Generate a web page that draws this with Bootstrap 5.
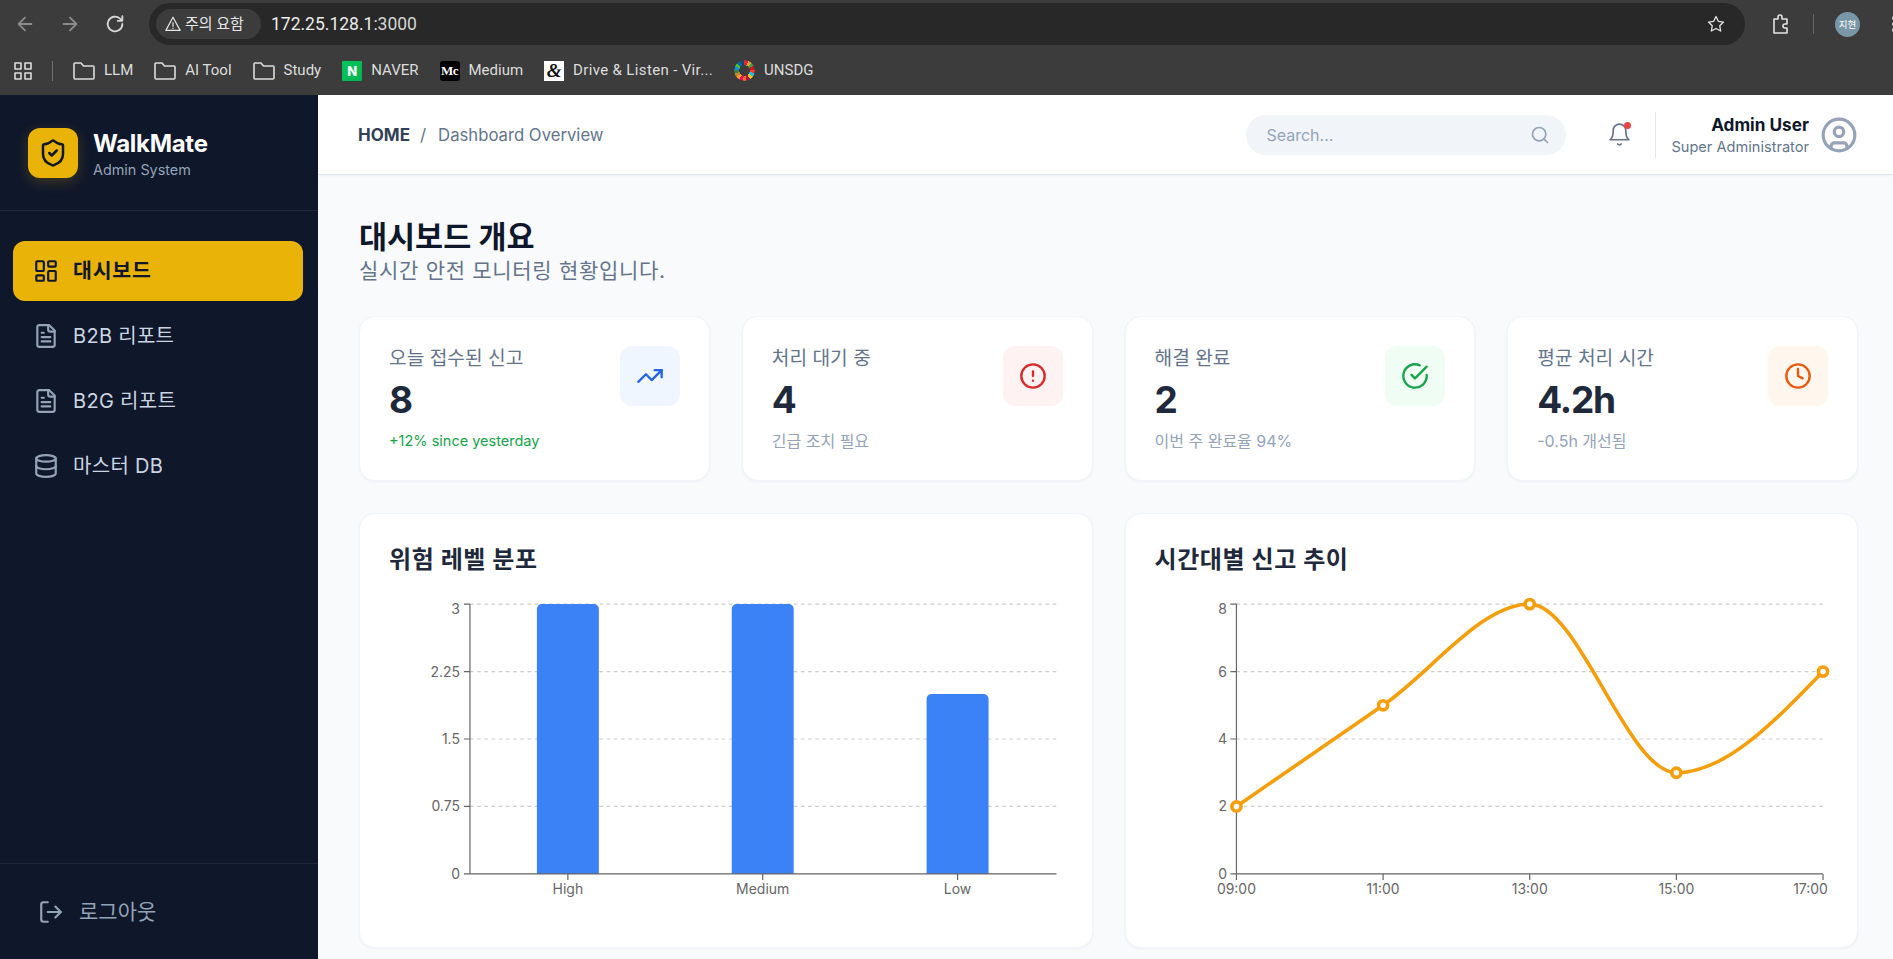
<!DOCTYPE html>
<html lang="ko">

<head>
    <meta charset="UTF-8">
    <meta name="viewport" content="width=device-width, initial-scale=1.0">
    <link href="https://cdn.jsdelivr.net/npm/bootstrap@5.3.3/dist/css/bootstrap.min.css" rel="stylesheet">
    <title>WalkMate Admin</title>
    <style>
        html, body { height: 100%; }

        body {
            font-family: Inter, "Noto Sans CJK KR", sans-serif;
            background: #f8fafc;
            color: #1e293b;
            overflow: hidden;
        }

        svg.ico { fill: none; stroke: currentColor; stroke-width: 2; stroke-linecap: round; stroke-linejoin: round; flex: none; display: block; }
        svg.ico.thin { stroke-width: 1.6; }

        /* browser frame */
        .chrome-frame { height: 95px; background: #3c3c3c; color: #e3e3e3; flex: none; font-family: Roboto, "Noto Sans CJK KR", sans-serif; overflow: hidden; }
        .tool-row { height: 46px; padding: 2px 0 0 14px; }
        .tool-row .nav-ico { width: 22px; height: 22px; margin-right: 23px; color: #8b8b8b; }
        .tool-row .nav-ico.on { color: #d6d6d6; }
        .addr-bar { width: 1596px; height: 42px; background: #282828; border-radius: 21px; padding-left: 7px; flex: none; }
        .warn-chip { height: 30px; width: 105px; background: #3c3c3c; border-radius: 15px; font-size: 15px; padding-left: 8px; gap: 3px; color: #e6e6e6; white-space: nowrap; }
        .url-text { font-size: 17.5px; margin-left: 10px; color: #ececec; }
        .url-port { color: #d5d5d5; }
        .star-ico { margin-right: 19px; }
        .ext-ico { margin-left: 24px; }
        .tool-sep { width: 1px; height: 20px; background: #666; flex: none; margin-left: 20px; }
        .avatar-dot { width: 25px; height: 25px; border-radius: 50%; background: #7a97a8; color: #fff; font-size: 9.5px; text-align: center; line-height: 25px; flex: none; margin-left: 21px; }
        .menu-ico { flex: none; margin-left: 32px; fill: #e3e3e3; }
        .mark-row { height: 49px; padding-left: 14px; font-size: 15px; color: #dcdcdc; }
        .mark-list { gap: 21px; }
        .mark-item { gap: 9px; white-space: nowrap; }
        .mark-sep { width: 1px; height: 20px; background: #6f6f6f; margin: 0 20px; }
        .mark-wide { letter-spacing: .35px; }
        .fav-box { width: 20px; height: 20px; font-weight: 700; line-height: 20px; text-align: center; flex: none; }
        .fav-naver { background: linear-gradient(135deg, #03c75a, #02b350); color: #fff; font-size: 13px; font-weight: 800; font-family: Inter, sans-serif; border-radius: 1px; }
        .fav-medium { background: #000; color: #fff; border-radius: 3px; font-size: 13px; letter-spacing: -.5px; font-family: "Liberation Serif", serif; }
        .fav-drive { background: #fff; color: #111; font-size: 19px; font-style: italic; font-family: "Liberation Serif", serif; }
        .fav-wheel {
            width: 21px; height: 21px; border-radius: 50%; flex: none;
            background: conic-gradient(#e5243b 0 21deg, #dda63a 0 42deg, #4c9f38 0 63deg, #c5192d 0 84deg, #ff3a21 0 105deg, #26bde2 0 126deg, #fcc30b 0 147deg, #a21942 0 168deg, #fd6925 0 189deg, #dd1367 0 210deg, #fd9d24 0 231deg, #bf8b2e 0 252deg, #3f7e44 0 273deg, #0a97d9 0 294deg, #56c02b 0 315deg, #00689d 0 336deg, #19486a 0 360deg);
            -webkit-mask: radial-gradient(circle, transparent 5px, #000 5.5px);
            mask: radial-gradient(circle, transparent 5px, #000 5.5px);
        }

        /* sidebar */
        .shell-row { min-height: 0; }
        .side-panel { width: 318px; background: #0f172a; flex: none; }
        .brand-block { height: 116px; padding: 33px 28px 0; border-bottom: 1px solid #1e293b; gap: 15px; }
        .brand-logo { width: 50px; height: 50px; background: #eab308; color: #0f172a; border-radius: 12px; box-shadow: 0 4px 14px rgba(234, 179, 8, .22); }
        .brand-name { font-size: 24px; font-weight: 700; line-height: 29px; color: #fff; letter-spacing: -.3px; padding-top: 1px; }
        .brand-sub { font-size: 14.4px; line-height: 24px; color: #94a3b8; }
        .side-menu { padding: 30px 15px 0 13px; gap: 5px; }
        .side-link { height: 60px; padding: 0 20px; gap: 14px; border-radius: 12px; font-size: 20px; letter-spacing: .3px; color: #cbd5e1; text-decoration: none; }
        .side-link svg { color: #94a3b8; }
        .side-link.active { background: #eab308; color: #0f172a; font-weight: 700; font-size: 20.5px; letter-spacing: .8px; }
        .side-link.active svg { color: #0f172a; }
        .side-foot { height: 96px; border-top: 1px solid #1e293b; padding: 0 0 0 38px; gap: 15px; font-size: 21px; color: #94a3b8; }

        /* top header */
        .main-pane { min-width: 0; }
        .top-head { height: 80px; background: #fff; border-bottom: 1px solid #e2e8f0; box-shadow: 0 1px 3px rgba(15, 23, 42, .05); padding: 0 35px 0 40px; flex: none; }
        .crumb-row { padding-top: 3px; }
        .crumb-home { font-weight: 700; font-size: 17px; color: #334155; }
        .crumb-page { font-size: 16.7px; color: #64748b; }
        .crumb-slash { font-size: 17px; color: #64748b; margin: 0 12px 0 10px; }
        .search-pill { width: 320px; height: 40px; background: #f1f5f9; border-radius: 20px; padding: 0 16px 0 20px; color: #94a3b8; font-size: 16px; }
        .bell-wrap { width: 25px; height: 25px; color: #64748b; margin-left: 41px; }
        .bell-dot { position: absolute; top: 0; right: 1px; width: 7px; height: 7px; background: #ef4444; border-radius: 50%; }
        .user-box { border-left: 1px solid #e2e8f0; margin-left: 23px; padding-left: 15px; height: 46px; gap: 11px; }
        .user-name { font-size: 17.2px; font-weight: 700; line-height: 24px; color: #0f172a; }
        .user-role { font-size: 14.6px; line-height: 20px; color: #64748b; }
        .user-ico { color: #94a3b8; }

        /* content */
        .page-body { padding: 41px 0 0 41px; width: 1540px; }
        .page-title { font-size: 30.5px; font-weight: 700; line-height: 42px; color: #0f172a; margin: 0; }
        .page-sub { font-size: 21px; letter-spacing: .7px; line-height: 26px; color: #64748b; margin: 0; }
        .stat-grid { display: grid; grid-template-columns: repeat(4, 1fr); gap: 32px; margin-top: 32px; }
        .panel-grid { display: grid; grid-template-columns: repeat(2, 1fr); gap: 32px; margin-top: 32px; }
        .stat-card, .chart-card { border: 1px solid #f1f5f9; border-radius: 16px; box-shadow: 0 1px 3px rgba(15, 23, 42, .05); background: #fff; }
        .stat-card { height: 165px; padding: 29px; }
        .stat-label { font-size: 19.2px; line-height: 25px; color: #64748b; }
        .stat-value { font-size: 37px; letter-spacing: -1.2px; font-weight: 700; line-height: 46px; color: #1e293b; margin-top: 6px; }
        .stat-note { font-size: 16px; line-height: 22px; color: #94a3b8; margin-top: 7px; }
        .stat-note.up { color: #16a34a; font-size: 14.5px; }
        .stat-icon { width: 60px; height: 60px; border-radius: 12px; }
        .tint-blue { background: #eff6ff; color: #2563eb; }
        .tint-red { background: #fef2f2; color: #dc2626; }
        .tint-green { background: #f0fdf4; color: #16a34a; }
        .tint-orange { background: #fff7ed; color: #ea580c; }
        .chart-card { height: 435px; padding: 29px; }
        .chart-title { font-size: 24px; letter-spacing: .6px; font-weight: 700; line-height: 34px; height: 55px; color: #1e293b; margin: 0; }
        .chart-svg { display: block; width: 100%; height: 320px; overflow: visible; }
        .chart-svg text { font-size: 14px; fill: #666; font-family: Inter, sans-serif; }
        .grid-line { stroke: #ccc; stroke-width: 1.2; stroke-dasharray: 3.6 3.6; }
        .axis-line { stroke: #666; stroke-width: 1.2; fill: none; }
        .trend-line { stroke: #f59e0b; stroke-width: 3.6; fill: none; }
        .trend-dot { stroke: #f59e0b; stroke-width: 3.6; fill: #fff; }
    </style>
</head>

<body>
    <div class="d-flex flex-column h-100">

        <!-- browser frame -->
        <div class="chrome-frame">
            <div class="tool-row d-flex align-items-center">
                <svg class="ico nav-ico" viewBox="0 0 24 24"><path d="M19 12H5M12 19l-7-7 7-7"/></svg>
                <svg class="ico nav-ico" viewBox="0 0 24 24"><path d="M5 12h14M12 5l7 7-7 7"/></svg>
                <svg class="ico nav-ico on" viewBox="0 0 24 24"><path d="M20 12a8 8 0 1 1-2.6-5.9L20 8.5M20 3.5v5h-5"/></svg>
                <div class="addr-bar d-flex align-items-center">
                    <div class="warn-chip d-flex align-items-center">
                        <svg class="ico thin" width="18" height="18" viewBox="0 0 24 24"><path d="M12 3 2.5 20.5h19Z"/><path d="M12 10v5M12 17.5v.5"/></svg>
                        <span>주의 요함</span>
                    </div>
                    <span class="url-text">172.25.128.1<span class="url-port">:3000</span></span>
                    <svg class="ico thin star-ico ms-auto" width="20" height="20" viewBox="0 0 24 24"><path d="m12 3 2.8 5.8 6.2.9-4.5 4.4 1.1 6.3L12 17.4l-5.6 3 1.1-6.3L3 9.7l6.2-.9Z"/></svg>
                </div>
                <svg class="ico thin ext-ico" width="24" height="24" viewBox="0 0 24 24"><path d="M5 7h4V5a2 2 0 0 1 4 0v2h5v5h-2a2 2 0 0 0 0 4h2v5H5Z"/></svg>
                <span class="tool-sep"></span>
                <span class="avatar-dot">지현</span>
                <svg class="menu-ico" width="4" height="18" viewBox="0 0 4 18"><circle cx="2" cy="3" r="2"/><circle cx="2" cy="9" r="2"/><circle cx="2" cy="15" r="2"/></svg>
            </div>
            <div class="mark-row d-flex align-items-center">
                <svg class="ico thin" width="18" height="18" viewBox="0 0 18 18"><rect x="1" y="1" width="6" height="6"/><rect x="11" y="1" width="6" height="6"/><rect x="1" y="11" width="6" height="6"/><rect x="11" y="11" width="6" height="6"/></svg>
                <span class="mark-sep"></span>
                <div class="mark-list d-flex align-items-center">
                    <div class="mark-item d-flex align-items-center"><svg class="ico thin" width="22" height="20" viewBox="0 0 22 20"><path d="M1 17V3a1 1 0 0 1 1-1h6l2.5 3H20a1 1 0 0 1 1 1v11a1 1 0 0 1-1 1H2a1 1 0 0 1-1-1Z"/></svg>LLM</div>
                    <div class="mark-item d-flex align-items-center"><svg class="ico thin" width="22" height="20" viewBox="0 0 22 20"><path d="M1 17V3a1 1 0 0 1 1-1h6l2.5 3H20a1 1 0 0 1 1 1v11a1 1 0 0 1-1 1H2a1 1 0 0 1-1-1Z"/></svg>AI Tool</div>
                    <div class="mark-item d-flex align-items-center"><svg class="ico thin" width="22" height="20" viewBox="0 0 22 20"><path d="M1 17V3a1 1 0 0 1 1-1h6l2.5 3H20a1 1 0 0 1 1 1v11a1 1 0 0 1-1 1H2a1 1 0 0 1-1-1Z"/></svg>Study</div>
                    <div class="mark-item d-flex align-items-center"><span class="fav-box fav-naver">N</span>NAVER</div>
                    <div class="mark-item d-flex align-items-center"><span class="fav-box fav-medium">Mc</span>Medium</div>
                    <div class="mark-item d-flex align-items-center"><span class="fav-box fav-drive">&amp;</span><span class="mark-wide">Drive &amp; Listen - Vir...</span></div>
                    <div class="mark-item d-flex align-items-center"><span class="fav-wheel"></span>UNSDG</div>
                </div>
            </div>
        </div>

        <div class="shell-row d-flex flex-grow-1">

            <!-- sidebar -->
            <aside class="side-panel d-flex flex-column">
                <div class="brand-block d-flex align-items-start">
                    <div class="brand-logo d-flex align-items-center justify-content-center">
                        <svg class="ico" width="30" height="30" viewBox="0 0 24 24"><path d="M20 13c0 5-3.5 7.5-7.66 8.95a1 1 0 0 1-.67-.01C7.5 20.5 4 18 4 13V6a1 1 0 0 1 1-1c2 0 4.5-1.2 6.24-2.72a1.17 1.17 0 0 1 1.52 0C14.51 3.81 17 5 19 5a1 1 0 0 1 1 1z"/><path d="m9 12 2 2 4-4"/></svg>
                    </div>
                    <div>
                        <div class="brand-name">WalkMate</div>
                        <div class="brand-sub">Admin System</div>
                    </div>
                </div>
                <nav class="side-menu nav flex-column flex-grow-1 flex-nowrap">
                    <a class="side-link active d-flex align-items-center" href="#">
                        <svg class="ico" width="26" height="26" viewBox="0 0 24 24"><rect x="3" y="3" width="7" height="9" rx="1"/><rect x="14" y="3" width="7" height="5" rx="1"/><rect x="14" y="12" width="7" height="9" rx="1"/><rect x="3" y="16" width="7" height="5" rx="1"/></svg>
                        대시보드</a>
                    <a class="side-link d-flex align-items-center" href="#">
                        <svg class="ico" width="26" height="26" viewBox="0 0 24 24"><path d="M15 2H6a2 2 0 0 0-2 2v16a2 2 0 0 0 2 2h12a2 2 0 0 0 2-2V7Z"/><path d="M14 2v4a2 2 0 0 0 2 2h4"/><path d="M10 9H8M16 13H8M16 17H8"/></svg>
                        B2B 리포트</a>
                    <a class="side-link d-flex align-items-center" href="#">
                        <svg class="ico" width="26" height="26" viewBox="0 0 24 24"><path d="M15 2H6a2 2 0 0 0-2 2v16a2 2 0 0 0 2 2h12a2 2 0 0 0 2-2V7Z"/><path d="M14 2v4a2 2 0 0 0 2 2h4"/><path d="M10 9H8M16 13H8M16 17H8"/></svg>
                        B2G 리포트</a>
                    <a class="side-link d-flex align-items-center" href="#">
                        <svg class="ico" width="26" height="26" viewBox="0 0 24 24"><ellipse cx="12" cy="5" rx="9" ry="3"/><path d="M3 5V19A9 3 0 0 0 21 19V5"/><path d="M3 12A9 3 0 0 0 21 12"/></svg>
                        마스터 DB</a>
                </nav>
                <div class="side-foot d-flex align-items-center">
                    <svg class="ico" width="26" height="26" viewBox="0 0 24 24"><path d="M9 21H5a2 2 0 0 1-2-2V5a2 2 0 0 1 2-2h4"/><path d="m16 17 5-5-5-5"/><path d="M21 12H9"/></svg>
                    로그아웃
                </div>
            </aside>

            <main class="main-pane flex-grow-1">
                <header class="top-head d-flex align-items-center">
                    <div class="crumb-row d-flex align-items-center">
                        <span class="crumb-home">HOME</span><span class="crumb-slash">/</span><span class="crumb-page">Dashboard Overview</span>
                    </div>
                    <div class="search-pill d-flex align-items-center justify-content-between ms-auto">
                        <span>Search...</span>
                        <svg class="ico" width="20" height="20" viewBox="0 0 24 24"><circle cx="11" cy="11" r="8"/><path d="m21 21-4.3-4.3"/></svg>
                    </div>
                    <div class="bell-wrap position-relative">
                        <svg class="ico thin" width="25" height="25" viewBox="0 0 24 24"><path d="M6 8a6 6 0 0 1 12 0c0 7 3 9 3 9H3s3-2 3-9"/><path d="M10.3 21a1.94 1.94 0 0 0 3.4 0"/></svg>
                        <span class="bell-dot"></span>
                    </div>
                    <div class="user-box d-flex align-items-center">
                        <div class="text-end">
                            <div class="user-name">Admin User</div>
                            <div class="user-role">Super Administrator</div>
                        </div>
                        <svg class="ico user-ico" width="38" height="38" viewBox="0 0 24 24"><circle cx="12" cy="12" r="10"/><circle cx="12" cy="10" r="3"/><path d="M7 20.662V19a2 2 0 0 1 2-2h6a2 2 0 0 1 2 2v1.662"/></svg>
                    </div>
                </header>

                <div class="page-body">
                    <h1 class="page-title">대시보드 개요</h1>
                    <p class="page-sub">실시간 안전 모니터링 현황입니다.</p>

                    <div class="stat-grid">
                        <div class="stat-card d-flex justify-content-between align-items-start">
                            <div>
                                <div class="stat-label">오늘 접수된 신고</div>
                                <div class="stat-value">8</div>
                                <div class="stat-note up">+12% since yesterday</div>
                            </div>
                            <div class="stat-icon tint-blue d-flex align-items-center justify-content-center">
                                <svg class="ico" width="28" height="28" viewBox="0 0 24 24"><path d="M16 7h6v6"/><path d="m22 7-8.5 8.5-5-5L2 17"/></svg>
                            </div>
                        </div>
                        <div class="stat-card d-flex justify-content-between align-items-start">
                            <div>
                                <div class="stat-label">처리 대기 중</div>
                                <div class="stat-value">4</div>
                                <div class="stat-note">긴급 조치 필요</div>
                            </div>
                            <div class="stat-icon tint-red d-flex align-items-center justify-content-center">
                                <svg class="ico" width="28" height="28" viewBox="0 0 24 24"><circle cx="12" cy="12" r="10"/><path d="M12 8v4M12 16h.01"/></svg>
                            </div>
                        </div>
                        <div class="stat-card d-flex justify-content-between align-items-start">
                            <div>
                                <div class="stat-label">해결 완료</div>
                                <div class="stat-value">2</div>
                                <div class="stat-note">이번 주 완료율 94%</div>
                            </div>
                            <div class="stat-icon tint-green d-flex align-items-center justify-content-center">
                                <svg class="ico" width="28" height="28" viewBox="0 0 24 24"><path d="M22 11.08V12a10 10 0 1 1-5.93-9.14"/><path d="m9 11 3 3L22 4"/></svg>
                            </div>
                        </div>
                        <div class="stat-card d-flex justify-content-between align-items-start">
                            <div>
                                <div class="stat-label">평균 처리 시간</div>
                                <div class="stat-value">4.2h</div>
                                <div class="stat-note">-0.5h 개선됨</div>
                            </div>
                            <div class="stat-icon tint-orange d-flex align-items-center justify-content-center">
                                <svg class="ico" width="28" height="28" viewBox="0 0 24 24"><circle cx="12" cy="12" r="10"/><path d="M12 6v6l4 2"/></svg>
                            </div>
                        </div>
                    </div>

                    <div class="panel-grid">
                        <div class="chart-card">
                            <h2 class="chart-title">위험 레벨 분포</h2>
                            <svg class="chart-svg" viewBox="0 0 674 320">
                                <g class="grid-line"><path d="M81 6H668M81 73.5H668M81 141H668M81 208.5H668"/></g>
                                <g fill="#3b82f6">
                                    <path d="M148 276V11a5 5 0 0 1 5-5h52a5 5 0 0 1 5 5V276Z"/>
                                    <path d="M343 276V11a5 5 0 0 1 5-5h52a5 5 0 0 1 5 5V276Z"/>
                                    <path d="M538 276V101a5 5 0 0 1 5-5h52a5 5 0 0 1 5 5V276Z"/>
                                </g>
                                <path class="axis-line" d="M81 6V276H668M75 6H81M75 73.5H81M75 141H81M75 208.5H81M75 276H81M179 276V282M374 276V282M569 276V282"/>
                                <g text-anchor="end">
                                    <text x="71" y="16">3</text><text x="71" y="78.5">2.25</text><text x="71" y="146">1.5</text><text x="71" y="213.5">0.75</text><text x="71" y="281">0</text>
                                </g>
                                <g text-anchor="middle">
                                    <text x="179" y="296">High</text><text x="374" y="296">Medium</text><text x="569" y="296">Low</text>
                                </g>
                            </svg>
                        </div>
                        <div class="chart-card">
                            <h2 class="chart-title">시간대별 신고 추이</h2>
                            <svg class="chart-svg" viewBox="0 0 674 320">
                                <g class="grid-line"><path d="M81.5 6H668.5M81.5 73.5H668.5M81.5 141H668.5M81.5 208.5H668.5"/></g>
                                <path class="axis-line" d="M81.5 6V276H668.5M75.5 6H81.5M75.5 73.5H81.5M75.5 141H81.5M75.5 208.5H81.5M75.5 276H81.5M81.5 276V282M228.25 276V282M375 276V282M521.75 276V282M668.5 276V282"/>
                                <path class="trend-line" d="M81.5 208.5L228.25 107.25C277.17 73.5 326.08 6 375 6C423.92 6 472.83 174.75 521.75 174.75C570.67 174.75 619.58 124.13 668.5 73.5"/>
                                <g class="trend-dot">
                                    <circle cx="81.5" cy="208.5" r="4.6"/><circle cx="228.25" cy="107.25" r="4.6"/><circle cx="375" cy="6" r="4.6"/><circle cx="521.75" cy="174.75" r="4.6"/><circle cx="668.5" cy="73.5" r="4.6"/>
                                </g>
                                <g text-anchor="end">
                                    <text x="72" y="16">8</text><text x="72" y="78.5">6</text><text x="72" y="146">4</text><text x="72" y="213.5">2</text><text x="72" y="281">0</text>
                                </g>
                                <g text-anchor="middle">
                                    <text x="81.5" y="296">09:00</text><text x="228.25" y="296">11:00</text><text x="375" y="296">13:00</text><text x="521.75" y="296">15:00</text><text x="656" y="296">17:00</text>
                                </g>
                            </svg>
                        </div>
                    </div>
                </div>
            </main>
        </div>
    </div>

    <script src="https://cdn.jsdelivr.net/npm/bootstrap@5.3.3/dist/js/bootstrap.bundle.min.js"></script>
</body>

</html>
